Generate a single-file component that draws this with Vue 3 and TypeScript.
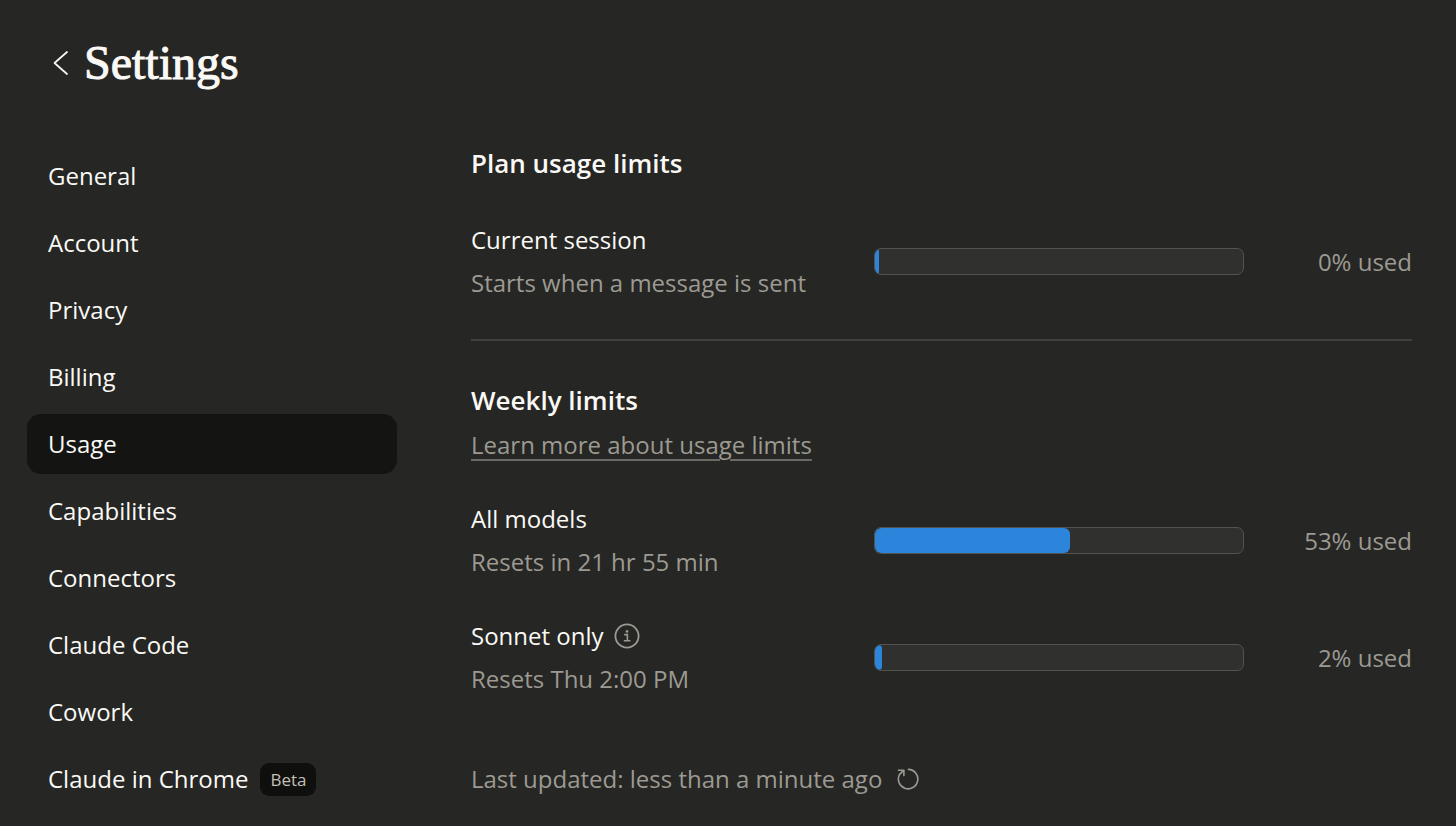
<script setup lang="ts">
import { ref } from 'vue'

interface NavItem {
  label: string
  badge?: string
}

interface Limit {
  id: string
  title: string
  detail: string
  percent: number
  info?: boolean
}

const items: NavItem[] = [
  { label: 'General' },
  { label: 'Account' },
  { label: 'Privacy' },
  { label: 'Billing' },
  { label: 'Usage' },
  { label: 'Capabilities' },
  { label: 'Connectors' },
  { label: 'Claude Code' },
  { label: 'Cowork' },
  { label: 'Claude in Chrome', badge: 'Beta' },
]

const active = ref('Usage')

const groups: { title: string; link?: string; limits: Limit[] }[] = [
  {
    title: 'Plan usage limits',
    limits: [
      { id: 'session', title: 'Current session', detail: 'Starts when a message is sent', percent: 0 },
    ],
  },
  {
    title: 'Weekly limits',
    link: 'Learn more about usage limits',
    limits: [
      { id: 'all', title: 'All models', detail: 'Resets in 21 hr 55 min', percent: 53 },
      { id: 'sonnet', title: 'Sonnet only', detail: 'Resets Thu 2:00 PM', percent: 2, info: true },
    ],
  },
]
</script>

<template>
  <div class="page">
    <header class="header">
      <button class="icon-button" type="button" aria-label="Back">
        <svg width="16" height="26" viewBox="0 0 16 26" fill="none" stroke="currentColor" stroke-width="1.7" stroke-linecap="round" stroke-linejoin="round">
          <path d="M14 2 1.5 13 14 24" />
        </svg>
      </button>
      <h1>Settings</h1>
    </header>

    <div class="body">
      <nav class="nav" aria-label="Settings">
        <a
          v-for="item in items"
          :key="item.label"
          href="#"
          :class="['nav-item', { active: item.label === active }]"
          :aria-current="item.label === active ? 'page' : undefined"
          @click.prevent="active = item.label"
        >
          <span>{{ item.label }}</span>
          <span v-if="item.badge" class="badge">{{ item.badge }}</span>
        </a>
      </nav>

      <main class="content">
        <section v-for="group in groups" :key="group.title" class="group">
          <div class="group-head">
            <h2>{{ group.title }}</h2>
            <a v-if="group.link" href="#" class="more">{{ group.link }}</a>
          </div>
          <div v-for="limit in group.limits" :key="limit.id" class="limit">
            <div class="limit-text">
              <div class="limit-title">
                <span :id="limit.id">{{ limit.title }}</span>
                <button v-if="limit.info" class="icon-button muted" type="button" aria-label="About this limit">
                  <svg width="26" height="26" viewBox="0 0 26 26" fill="none" stroke="currentColor" stroke-width="1.8">
                    <circle cx="13" cy="13" r="11.6" />
                    <path d="M10.2 11.6h3.2v6M9.8 17.8h6.6" stroke-width="1.6" />
                    <circle cx="13" cy="8.4" r="1.3" fill="currentColor" stroke="none" />
                  </svg>
                </button>
              </div>
              <div class="muted">{{ limit.detail }}</div>
            </div>
            <div
              class="track"
              role="progressbar"
              :aria-labelledby="limit.id"
              :aria-valuenow="limit.percent"
              aria-valuemin="0"
              aria-valuemax="100"
            >
              <div class="fill" :style="{ width: limit.percent + '%' }"></div>
            </div>
            <div class="used muted">{{ limit.percent }}% used</div>
          </div>
        </section>

        <div class="updated muted">
          <span>Last updated: less than a minute ago</span>
          <button class="icon-button muted" type="button" aria-label="Refresh">
            <svg width="22" height="22" viewBox="0 0 22 22" fill="none" stroke="currentColor" stroke-width="1.6" stroke-linecap="round" stroke-linejoin="round">
              <path d="M11.5 1.4A9.7 9.7 0 1 1 2.6 6.4L6.6 2.4M1.5 2.2h5.4v5.4" />
            </svg>
          </button>
        </div>
      </main>
    </div>
  </div>
</template>

<style>
body {
  margin: 0;
  background: #262624;
}
</style>

<style scoped>
.page {
  box-sizing: border-box;
  min-height: 100vh;
  padding: 36px 44px 16px 27px;
  color: #faf9f5;
  background: #262624;
  font-family: "Open Sans", "Noto Sans", sans-serif;
  font-size: 24px;
  line-height: 36px;
}

.header {
  display: flex;
  align-items: center;
  gap: 15px;
  padding-left: 26px;
}

h1,
h2 {
  margin: 0;
}

h1 {
  font-family: "Liberation Serif", serif;
  font-size: 48px;
  line-height: 54px;
  font-weight: 400;
  -webkit-text-stroke: 1px currentColor;
}

h2 {
  font-size: 26px;
  line-height: 34px;
  font-weight: 600;
}

h2:last-child {
  padding-bottom: 4px;
}

.icon-button {
  display: flex;
  padding: 0;
  border: 0;
  background: none;
  color: inherit;
  cursor: pointer;
}

.body {
  display: grid;
  grid-template-columns: 370px minmax(0, 1fr);
  align-items: start;
  gap: 74px;
  padding-top: 56px;
}

.nav {
  display: flex;
  flex-direction: column;
  gap: 7px;
}

.nav-item {
  display: flex;
  align-items: center;
  gap: 12px;
  height: 60px;
  padding: 0 21px;
  border-radius: 14px;
  color: inherit;
  text-decoration: none;
}

.nav-item.active {
  background: #141413;
}

.badge {
  padding: 0 10px;
  border-radius: 9px;
  background: #0f0f0e;
  color: #c2c0b6;
  font-size: 17px;
  line-height: 33px;
}

.group {
  display: flex;
  flex-direction: column;
  gap: 38px;
}

.group + .group {
  margin-top: 38px;
  padding-top: 42px;
  border-top: 2px solid #40403d;
}

.group-head {
  display: flex;
  flex-direction: column;
  align-items: flex-start;
  gap: 10px;
}

.more {
  color: #9c9a92;
  text-decoration-line: underline;
  text-decoration-thickness: 2px;
  text-decoration-color: #6b6a64;
  text-underline-offset: 5px;
}

.limit {
  display: grid;
  grid-template-columns: minmax(0, 1fr) 370px 168px;
  align-items: center;
}

.limit-text {
  display: flex;
  flex-direction: column;
  gap: 7px;
}

.limit-title {
  display: flex;
  align-items: center;
  gap: 10px;
}

.muted {
  color: #9c9a92;
}

.track {
  box-sizing: border-box;
  height: 27px;
  overflow: hidden;
  border: 1px solid #52524e;
  border-radius: 7px;
  background: #30302e;
}

.fill {
  min-width: 4px;
  height: 100%;
  border-radius: 6px;
  background: #2c84db;
}

.used {
  text-align: right;
}

.updated {
  display: flex;
  align-items: center;
  gap: 15px;
  margin-top: 64px;
}
</style>
